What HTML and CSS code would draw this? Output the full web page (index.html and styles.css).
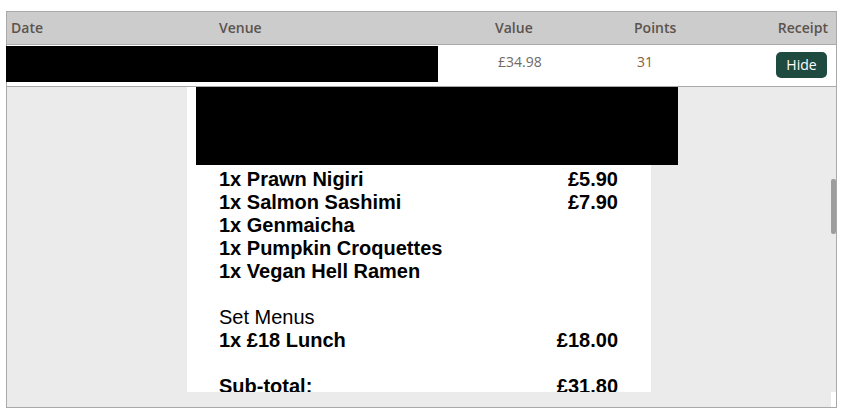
FILE: index.html
```html
<!DOCTYPE html>
<html>
<head>
<meta charset="utf-8">
<link rel="stylesheet" href="styles.css">
</head>
<body>
<div class="table">
  <div class="row head">
    <div class="cell">Date</div>
    <div class="cell">Venue</div>
    <div class="cell">Value</div>
    <div class="cell">Points</div>
    <div class="cell cell-end">Receipt</div>
  </div>
  <div class="row data">
    <div class="redact-row"></div>
    <div class="cell val">£34.98</div>
    <div class="cell pts">31</div>
    <div class="cell cell-end"><button class="btn">Hide</button></div>
  </div>
  <div class="receipt-area">
    <div class="viewport">
      <div class="paper">
        <div class="redact-top"></div>
        <div class="lines">
          <div class="line b"><span>1x Prawn Nigiri</span><span>£5.90</span></div>
          <div class="line b"><span>1x Salmon Sashimi</span><span>£7.90</span></div>
          <div class="line b"><span>1x Genmaicha</span></div>
          <div class="line b"><span>1x Pumpkin Croquettes</span></div>
          <div class="line b"><span>1x Vegan Hell Ramen</span></div>
          <div class="blank"></div>
          <div class="line"><span>Set Menus</span></div>
          <div class="line b"><span>1x £18 Lunch</span><span>£18.00</span></div>
          <div class="blank"></div>
          <div class="line b"><span>Sub-total:</span><span>£31.80</span></div>
        </div>
      </div>
    </div>
    <div class="hstrip"><div class="corner"></div></div>
    <div class="thumb"></div>
  </div>
</div>
</body>
</html>
```
FILE: styles.css
```css
html, body { margin: 0; padding: 0; background: #fff; }
body { font-family: "Open Sans", "Liberation Sans", sans-serif; font-size: 14px; }

.table {
  margin: 11px 0 0 6px;
  width: 829px;
  border: 1px solid #a9a9a9;
}

.row {
  display: grid;
  grid-template-columns: 208px 276px 139px 100px 106px;
}

.head {
  height: 32px;
  background: #cccccc;
  border-bottom: 1px solid #a9a9a9;
  align-items: center;
  color: #5b534d;
  font-weight: 600;
  line-height: 19px;
}
.head .cell { padding: 0 0 1px 4px; }
.head .cell-end { justify-self: end; padding-left: 0; padding-right: 8px; }

.data {
  height: 41px;
  background: #fff;
  border-bottom: 1px solid #a9a9a9;
  align-items: start;
  line-height: 19px;
}
.redact-row {
  grid-column: 1 / 3;
  margin: 1px 0 0 -1px;
  width: 432px;
  height: 36px;
  background: #000;
}
.val { padding: 7px 0 0 7px; color: #6e6a67; }
.pts { padding: 7px 0 0 7px; color: #86603f; }
.data .cell-end { justify-self: end; padding: 7px 9px 0 0; }

.btn {
  display: block;
  width: 51px;
  height: 26px;
  padding: 0;
  border: 0;
  border-radius: 5px;
  background: #1f4a40;
  color: #fff;
  font-family: "Open Sans", sans-serif;
  font-size: 14px;
  line-height: 26px;
}

.receipt-area {
  position: relative;
  background: #ebebeb;
}
.viewport {
  height: 305px;
  overflow: hidden;
  padding-right: 5px;
}
.paper {
  width: 464px;
  margin: 0 auto;
  background: #fff;
  min-height: 305px;
}
.redact-top {
  margin-left: 9px;
  width: 482px;
  height: 78px;
  background: #000;
}
.lines {
  padding: 3px 33px 0 32px;
  font-family: "Liberation Sans", Arial, sans-serif;
  font-size: 20px;
  line-height: 23px;
  color: #000;
}
.line { display: flex; justify-content: space-between; }
.line.b { font-weight: 700; }
.blank { height: 23px; }

.hstrip {
  height: 15px;
  display: flex;
  justify-content: flex-end;
}
.corner { width: 5px; height: 15px; background: #fff; }

.thumb {
  position: absolute;
  right: 0;
  top: 92px;
  width: 5px;
  height: 55px;
  border-radius: 2px;
  background: #9d9d9d;
}
```
